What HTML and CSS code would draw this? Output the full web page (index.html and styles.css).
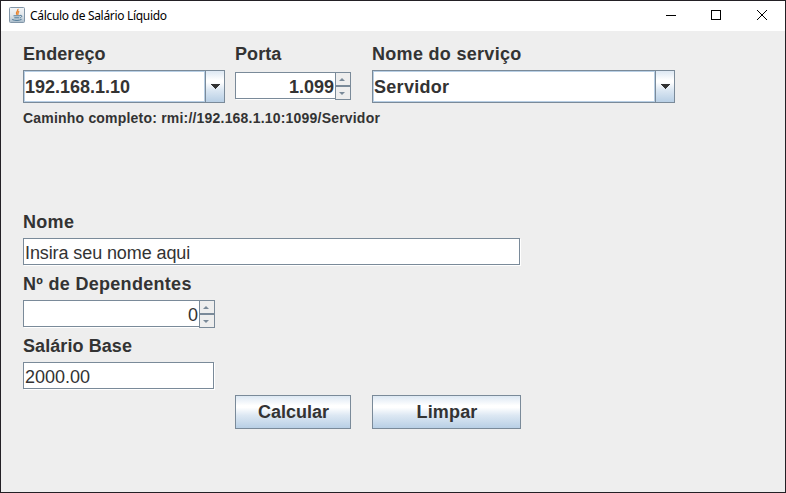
FILE: index.html
```
<!DOCTYPE html>
<html lang="pt-BR">
<head>
<meta charset="utf-8">
<title>Cálculo de Salário Líquido</title>
<link rel="stylesheet" href="styles.css">
</head>
<body>
<div class="window">
  <header class="titlebar">
    <svg class="app-icon" width="16" height="16" viewBox="0 0 16 16">
      <defs><linearGradient id="ig" x1="0" y1="0" x2="0" y2="1"><stop offset="0" stop-color="#f4f6f7"/><stop offset=".5" stop-color="#e2e7eb"/><stop offset="1" stop-color="#a9bccb"/></linearGradient></defs>
      <rect x=".5" y=".5" width="15" height="15" rx="1" fill="url(#ig)" stroke="#8296a8"/>
      <path d="M8.800 1.800c1.200 2-3.200 3-.8 6M10.200 4.400c-2.400 1.200-.4 2-1.500 3.400" fill="none" stroke="#e8822d" stroke-width="1.300"/>
      <path d="M4.500 8.800h6.500M5.300 10.800h4.900M11 8.400c2.600-.6 2.200 2-.2 2.500M3.200 12.500c2.500 1.300 7.200 1.200 9.400-.2" fill="none" stroke="#4e7896" stroke-width="1"/>
    </svg>
    <h1 class="title">Cálculo de Salário Líquido</h1>
    <svg class="controls" width="137" height="30" viewBox="0 0 137 30" fill="none" stroke="#000" stroke-width="1">
      <path d="M18 14.500h10"/>
      <rect x="63.500" y="9.500" width="9" height="9"/>
      <path d="M109 9l10 10M119 9l-10 10"/>
    </svg>
  </header>
  <main class="content">
    <section class="connection">
      <div class="group address">
        <label class="label">Endereço</label>
        <div class="combo"><span class="combo-text">192.168.1.10</span><span class="combo-button"><svg width="10" height="5" viewBox="0 0 10 5" shape-rendering="crispEdges"><path d="M0 0h10L5 5z" fill="#333"/></svg></span></div>
      </div>
      <div class="group port">
        <label class="label">Porta</label>
        <div class="spinner bold"><span class="spinner-text">1.099</span><span class="steps"><span class="step"><i class="up"></i></span><span class="step"><i class="down"></i></span></span></div>
      </div>
      <div class="group service">
        <label class="label wide">Nome do serviço</label>
        <div class="combo"><span class="combo-text wide">Servidor</span><span class="combo-button"><svg width="10" height="5" viewBox="0 0 10 5" shape-rendering="crispEdges"><path d="M0 0h10L5 5z" fill="#333"/></svg></span></div>
      </div>
    </section>
    <p class="path">Caminho completo: rmi://192.168.1.10:1099/Servidor</p>
    <section class="form">
      <label class="label wide">Nome</label>
      <div class="field name">Insira seu nome aqui</div>
      <label class="label wide">Nº de Dependentes</label>
      <div class="spinner dependents"><span class="spinner-text">0</span><span class="steps"><span class="step"><i class="up"></i></span><span class="step"><i class="down"></i></span></span></div>
      <label class="label">Salário Base</label>
      <div class="field salary">2000.00</div>
    </section>
    <div class="actions">
      <button class="button calculate">Calcular</button>
      <button class="button clear">Limpar</button>
    </div>
  </main>
</div>
</body>
</html>
```

FILE: styles.css
```
* { box-sizing: border-box; }
body { margin: 0; overflow: hidden; }
.window {
  width: 786px;
  height: 493px;
  border: 1px solid #232025;
  background: #eee;
  color: #333;
  font: 18px "Liberation Sans", Arial, sans-serif;
}
.titlebar {
  display: flex;
  align-items: flex-start;
  height: 30px;
  padding-left: 8px;
  background: #fff;
}
.app-icon { margin-top: 6px; }
.title {
  margin: 0 0 0 5px;
  font: 12px/29px "Noto Sans", "Open Sans", sans-serif;
  letter-spacing: -0.31px;
  color: #000;
  white-space: nowrap;
}
.controls { margin-left: auto; }
.content { padding: 12px 0 0 22px; }
.connection { display: flex; }
.address { width: 202px; margin-right: 10px; }
.port { width: 116px; margin-right: 21px; }
.service { width: 303px; }
.label {
  display: block;
  height: 22px;
  line-height: 22px;
  font-weight: bold;
  letter-spacing: 0.08px;
  white-space: nowrap;
}
.wide { letter-spacing: 0.3px; }
.combo {
  display: flex;
  height: 33px;
  margin-top: 5px;
  border: 1px solid #7a8a99;
  font-weight: bold;
}
.combo-text {
  flex: 1;
  border: 1px solid #b8cfe5;
  background: #fff;
  line-height: 30px;
}
.combo-button {
  display: flex;
  align-items: center;
  justify-content: center;
  width: 19px;
  padding-right: 1px;
  border-left: 1px solid #7a8a99;
  background: linear-gradient(#dde8f3 0%, #fff 30%, #fff 36%, #dde8f3 60%, #b8cfe5 100%);
}
.combo-button svg { flex: none; }
.spinner { display: flex; height: 28px; }
.port .spinner { margin-top: 7px; }
.bold { font-weight: bold; }
.spinner-text {
  flex: 1;
  height: 27px;
  border: 1px solid #7a8a99;
  border-right: 0;
  background: #fff;
  box-shadow: 1px 1px 0 #fff;
  line-height: 28px;
  padding-right: 1px;
  text-align: right;
}
.steps { width: 16px; z-index: 1; }
.step {
  display: flex;
  align-items: center;
  justify-content: center;
  height: 14px;
  padding-right: 2px;
  border: 1px solid #7a8a99;
  background: #eee;
}
.up, .down { border: solid transparent; border-width: 0 3px; }
.up { border-bottom: 3px solid #7a8a99; }
.down { border-top: 3px solid #7a8a99; }
.path {
  height: 20px;
  margin: 5px 0 0;
  font-size: 14px;
  font-weight: bold;
  line-height: 20px;
  letter-spacing: 0.2px;
  white-space: nowrap;
}
.form { margin-top: 83px; }
.field {
  height: 27px;
  margin: 5px 0 8px;
  padding-left: 1px;
  border: 1px solid #7a8a99;
  background: #fff;
  box-shadow: 1px 1px 0 #fff;
  line-height: 28px;
}
.name { width: 497px; letter-spacing: -0.1px; }
.dependents { width: 192px; margin: 5px 0 7px; }
.salary { width: 191px; margin-bottom: 0; }
.actions { display: flex; gap: 21px; margin: 6px 0 0 212px; }
.button {
  height: 34px;
  padding: 0 0 0 1px;
  border: 1px solid #7a8a99;
  background: linear-gradient(#dde8f3 0%, #fff 30%, #fff 36%, #dde8f3 60%, #b8cfe5 100%);
  color: #333;
  font: bold 18px "Liberation Sans", Arial, sans-serif;
}
.calculate { width: 116px; }
.clear { width: 149px; letter-spacing: 0.15px; }
```
